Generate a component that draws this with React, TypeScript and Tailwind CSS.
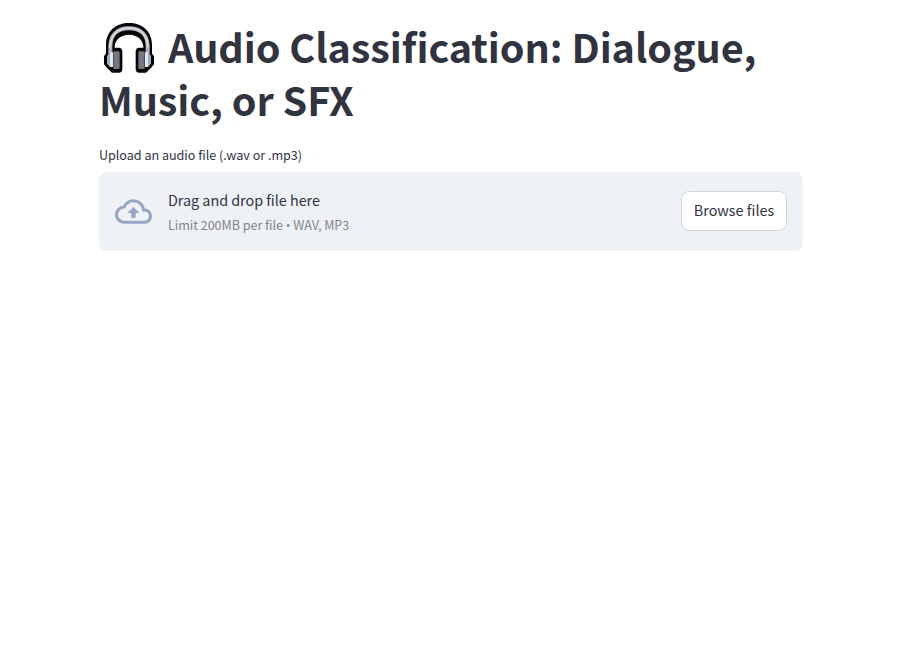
function Headphones() {
  return (
    <svg width="50" height="50" viewBox="0 0 150 150" role="img" aria-label="Headphones" className="mt-[4px] shrink-0">
      <path d="M6 100V66C6 24 36 0 75 0s69 24 69 66v34h-26V70C116 50 100 35 75 35S34 50 32 70v30Z" fill="#050505" />
      <path d="M17 74L7 90 0 100v24l10 12 14 13h20q11 0 11-11V87q0-13-11-13Z" fill="#050505" />
      <path d="M133 74l10 16 7 10v24l-10 12-14 13h-20q-11 0-11-11V87q0-13 11-13Z" fill="#050505" />
      <path d="M19 94V68C20 33 42 16 75 16s55 17 56 52v26" fill="none" stroke="#b4b3bd" strokeWidth="12" />
      <path d="M18 74C19 36 42 15 75 15s55 20 57 59" fill="none" stroke="#d7d6dd" strokeWidth="6" />
      <path d="M9 99l9-11h4v43h-5l-8-9Z" fill="#9eacc5" />
      <path d="M18 88h9v44h-9Z" fill="#e3e8f0" />
      <path d="M141 99l-9-11h-4v43h5l8-9Z" fill="#9eacc5" />
      <path d="M123 88h9v44h-9Z" fill="#e3e8f0" />
      <path d="M28 85h15q4 0 4 4v45q0 4-4 4H28Z" fill="#777681" />
      <path d="M122 85h-15q-4 0-4 4v45q0 4 4 4h15Z" fill="#777681" />
    </svg>
  );
}

function CloudUpload() {
  return (
    <svg viewBox="0 0 24 24" fill="currentColor" aria-hidden="true" className="size-[37px] shrink-0 text-[#97a6c3]">
      <path d="M19.35 10.04A7.49 7.49 0 0 0 12 4C9.11 4 6.6 5.64 5.35 8.04A5.994 5.994 0 0 0 0 14c0 3.31 2.69 6 6 6h13c2.76 0 5-2.24 5-5 0-2.64-2.05-4.78-4.65-4.96zM19 18H6c-2.21 0-4-1.79-4-4 0-2.05 1.53-3.76 3.56-3.97l1.07-.11.5-.95A5.469 5.469 0 0 1 12 6c2.62 0 4.88 1.86 5.39 4.43l.3 1.5 1.53.11A2.98 2.98 0 0 1 22 15c0 1.65-1.35 3-3 3zM8 13h2.55v3h2.9v-3H16l-4-4z" />
    </svg>
  );
}

export default function App() {
  return (
    <main className="min-h-screen bg-white font-['Noto_Sans_CJK_SC',sans-serif] text-[#31333f]">
      <div className="ml-[99px] w-[704px] pt-[19px]">
        <h1 className="text-[39.6px] leading-[53px] font-bold tracking-[-0.08px]">
          <span className="flex h-[53px] gap-[14px] pl-[5px] whitespace-nowrap">
            <Headphones />
            <span>Audio Classification: Dialogue,</span>
          </span>
          <span className="block">Music, or SFX</span>
        </h1>
        <p className="mt-[19px] text-[12.6px] leading-[21px] tracking-[-0.03px]">Upload an audio file (.wav or .mp3)</p>
        <section className="mt-[7px] flex h-[79px] items-center rounded-lg bg-[#eef2f7] px-4">
          <CloudUpload />
          <div className="ml-4 flex-1">
            <div className="-mt-px text-[14.4px] leading-[26px] tracking-[-0.04px]">Drag and drop file here</div>
            <div className="mt-px text-[12.6px] leading-[22px] tracking-[-0.045px] text-[#838488]">
              Limit 200MB per file <span className="font-['Open_Sans'] leading-none">•</span> WAV, MP3
            </div>
          </div>
          <button className="mb-[2px] h-10 w-[106px] rounded-lg border border-[#d5d6d9] bg-white pb-px text-[14.4px]">Browse files</button>
        </section>
      </div>
    </main>
  );
}
